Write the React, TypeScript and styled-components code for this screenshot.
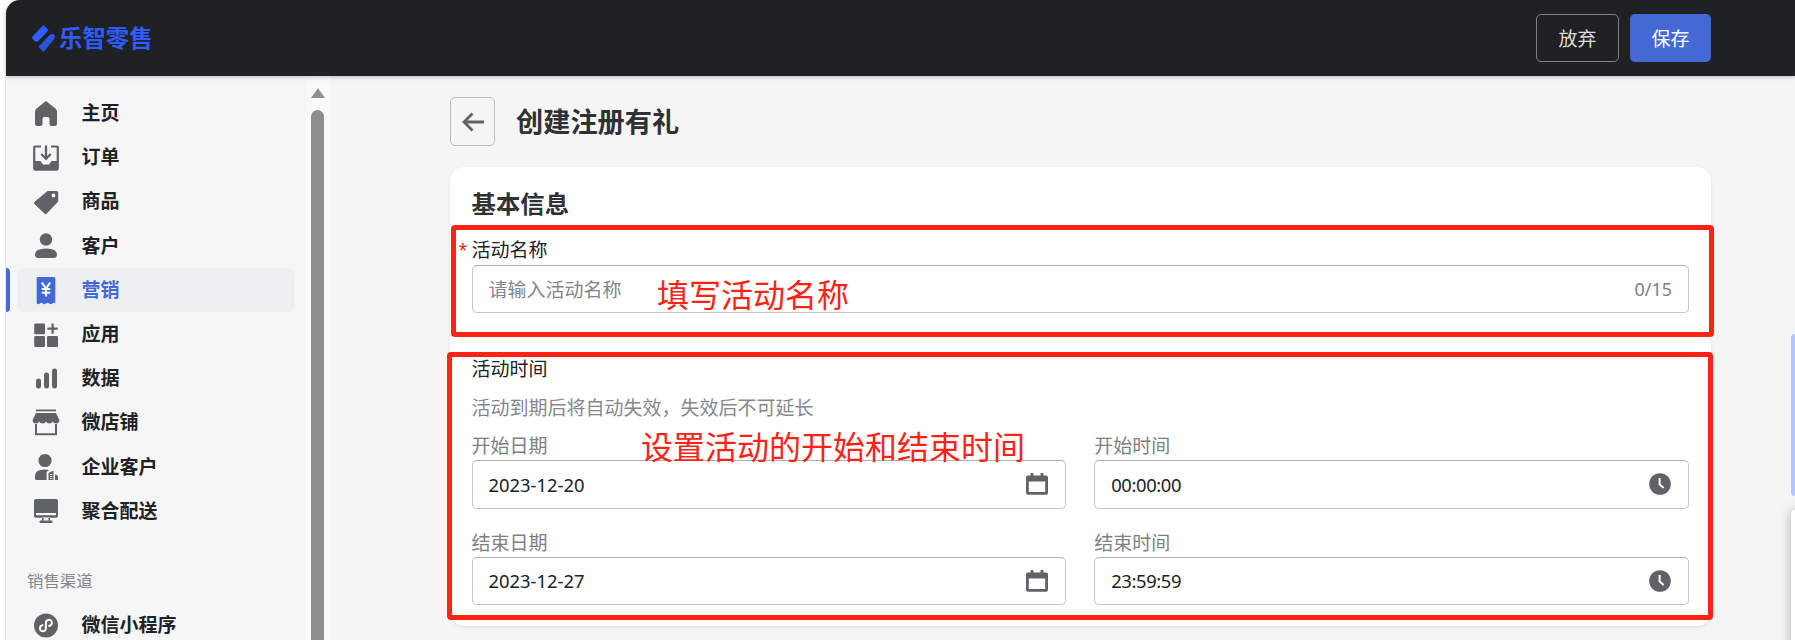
import React from 'react'
import styled, { createGlobalStyle } from 'styled-components'

const GlobalStyle = createGlobalStyle`
  html, body {
    margin: 0;
    padding: 0;
    background: #fff;
    overflow: hidden;
  }
  * {
    box-sizing: border-box;
  }
  body, input, button {
    font-family: "Noto Sans", "Noto Sans CJK SC", sans-serif;
  }
`

const GREY = '#5f6368'

const HomeIcon = () => (
  <svg width="24" height="24" viewBox="0 0 24 24" fill={GREY} overflow="visible">
    <path d="M12 -1 L21.5 6.5 Q23 7.8 23 9.5 V21.5 Q23 24 20.5 24 H17.5 Q15.5 24 15.5 22 V17 Q15.5 15 13.5 15 H10.5 Q8.5 15 8.5 17 V22 Q8.5 24 6.5 24 H3.5 Q1 24 1 21.5 V9.5 Q1 7.8 2.5 6.5 Z" />
  </svg>
)

const OrderIcon = () => (
  <svg width="24" height="24" viewBox="0 0 24 24" fill="none" overflow="visible">
    <path d="M7 0.5 H1.5 Q0.2 0.5 0.2 1.8 V22.2 Q0.2 23.6 1.5 23.6 H22.5 Q23.8 23.6 23.8 22.2 V1.8 Q23.8 0.5 22.5 0.5 H17" stroke={GREY} strokeWidth="2.2" />
    <path d="M0.5 15 H6.5 L9 18.5 H15 L17.5 15 H23.5 V23.5 H0.5 Z" fill={GREY} />
    <path d="M12 -0.5 V12.5 M7.2 8 L12 12.8 L16.8 8" stroke={GREY} strokeWidth="2.3" />
  </svg>
)

const TagIcon = () => (
  <svg width="24" height="24" viewBox="0 0 24 24" fill={GREY} overflow="visible">
    <path
      fillRule="evenodd"
      d="M13.5 1 H22.5 Q24.2 1 24.2 2.7 V11.5 L12.8 23.6 Q11.6 24.8 10.4 23.6 L0.4 14 Q-0.6 13 0.4 12 Z M19.5 3.6 A1.9 1.9 0 1 0 19.5 7.4 A1.9 1.9 0 1 0 19.5 3.6 Z"
    />
  </svg>
)

const UserIcon = () => (
  <svg width="24" height="24" viewBox="0 0 24 24" fill={GREY} overflow="visible">
    <circle cx="12" cy="5.5" r="6.2" />
    <path d="M1 20.5 Q1 14.5 12 14.5 Q23 14.5 23 20.5 Q23 24 19.5 24 H4.5 Q1 24 1 20.5 Z" />
  </svg>
)

const ReceiptIcon = () => (
  <svg width="24" height="24" viewBox="0 0 24 24" fill="none" overflow="visible">
    <path
      d="M4 -1 H20 Q21.3 -1 21.3 0.3 V25.5 Q19.8 24 18.2 25.5 Q16.7 26.8 15.1 25.5 Q13.5 24 12 25.5 Q10.4 26.8 8.9 25.5 Q7.3 24 5.8 25.5 Q4.2 26.8 2.7 25.5 V0.3 Q2.7 -1 4 -1 Z"
      fill="#4369d6"
    />
    <path d="M7.8 4.5 L12 10.5 L16.2 4.5 M12 10.5 V18.5 M7.8 11 H16.2 M7.8 14.8 H16.2" stroke="#fff" strokeWidth="2.1" />
  </svg>
)

const AppsIcon = () => (
  <svg width="24" height="24" viewBox="0 0 24 24" fill={GREY} overflow="visible">
    <rect x="0.2" y="0.5" width="10.8" height="10.8" rx="1.2" />
    <rect x="0.2" y="13" width="10.8" height="11" rx="1.2" />
    <rect x="13" y="13" width="11" height="11" rx="1.2" />
    <path d="M13.4 5.6 H23.8 M18.6 0.5 V10.8" stroke={GREY} strokeWidth="2.3" />
  </svg>
)

const BarsIcon = () => (
  <svg width="24" height="24" viewBox="0 0 24 24" fill={GREY} overflow="visible">
    <rect x="2" y="11.5" width="5" height="10" rx="2.5" />
    <rect x="10" y="5.5" width="5" height="16" rx="2.5" />
    <rect x="18" y="1.5" width="5" height="20" rx="2.5" />
  </svg>
)

const StoreIcon = () => (
  <svg width="24" height="24" viewBox="0 0 24 24" fill="none" overflow="visible">
    <path d="M2 -0.6 H22" stroke={GREY} strokeWidth="1.8" />
    <path d="M2 2 H22 L25.4 9 Q25.4 12.4 22.2 12.4 Q19.4 12.4 18.9 10.4 Q18 12.4 15.3 12.4 Q12.8 12.4 12 10.4 Q11.2 12.4 8.7 12.4 Q6 12.4 5.1 10.4 Q4.6 12.4 1.8 12.4 Q-1.4 12.4 -1.4 9 Z" fill={GREY} />
    <path d="M2 13 V23.2 H22 V13" stroke={GREY} strokeWidth="2" />
  </svg>
)

const CompanyUserIcon = () => (
  <svg width="24" height="24" viewBox="0 0 24 24" fill={GREY} overflow="visible">
    <circle cx="11" cy="5.5" r="6.6" />
    <path d="M1 25 V21 Q1 14.6 11 14.6 Q13.8 14.6 15 15 L12.6 17 V25 H2.5 Q1 25 1 23.5 Z" />
    <path d="M14.5 25 V18 L19.5 15.5 V25 Z M21 25 V19.5 Q24 20 24 22 V25 Z" />
    <path d="M16 19.5 H18.2 M16 21.5 H18.2 M16 23.5 H18.2" stroke="#f7f7f7" strokeWidth="0.9" />
  </svg>
)

const DesktopIcon = () => (
  <svg width="24" height="24" viewBox="0 0 24 24" fill={GREY} overflow="visible">
    <path d="M1.8 0 H22.2 Q24 0 24 1.8 V17 Q24 18.8 22.2 18.8 H1.8 Q0 18.8 0 17 V1.8 Q0 0 1.8 0 Z" />
    <rect x="2" y="14" width="20" height="2.2" fill="#f7f7f7" />
    <path d="M8.5 18.5 L7.8 21.5 H16.2 L15.5 18.5 Z" fill="#f7f7f7" />
    <path d="M9 18.8 L8.4 21.6 M15 18.8 L15.6 21.6" stroke={GREY} strokeWidth="1.6" />
    <rect x="5.5" y="21.4" width="13" height="2.6" rx="1.2" />
  </svg>
)

const MiniProgramIcon = () => (
  <svg width="27" height="27" viewBox="0 0 27 27" fill="none">
    <circle cx="13.5" cy="13.5" r="13.5" fill={GREY} />
    <path
      d="M6.8 15.8 Q6.4 19.8 9.8 20 Q12.9 20 13.4 16.8 V10.2 Q13.9 7 17 7 Q20.4 7.2 20 11.2 Q19.6 13.6 17 14"
      stroke="#fff"
      strokeWidth="2.3"
      strokeLinecap="round"
    />
    <path d="M6.8 15.8 Q7.2 13.6 9.6 13.2" stroke="#fff" strokeWidth="2.3" strokeLinecap="round" />
  </svg>
)

const CalendarIcon = () => (
  <svg width="24" height="24" viewBox="0 0 24 24" fill={GREY}>
    <path
      fillRule="evenodd"
      d="M5.6 1 H8.4 V3.6 H15.6 V1 H18.4 V3.6 H21 Q23 3.6 23 5.6 V20.8 Q23 22.8 21 22.8 H3 Q1 22.8 1 20.8 V5.6 Q1 3.6 3 3.6 H5.6 Z M3.8 9.4 V20 H20.2 V9.4 Z"
    />
  </svg>
)

const ClockIcon = () => (
  <svg width="24" height="24" viewBox="0 0 24 24" fill="none">
    <circle cx="12" cy="12" r="10.8" fill={GREY} />
    <path d="M11.6 6 V12.4 L15.6 16" stroke="#fff" strokeWidth="2" />
  </svg>
)

const BackIcon = () => (
  <svg width="24" height="24" viewBox="0 0 24 24" fill="none">
    <path d="M23 12 H3 M11.5 3.5 L3 12 L11.5 20.5" stroke={GREY} strokeWidth="2.8" />
  </svg>
)

const LogoMark = () => (
  <svg width="23" height="27" viewBox="0 0 23 27" fill="#2f5bff">
    <path d="M11.4 0 L16.6 5.2 L6.4 16 Q4.2 17.8 2.2 15.8 L0.7 14 Q-0.4 12.6 0.7 11.2 Z" />
    <path d="M21.4 9 Q23.8 11 22.4 13.6 Q22 14.4 21.4 15 L11.6 27 L6.4 21.8 L16.6 11 Q19 8.4 21.4 9 Z" fillOpacity="0.85" />
  </svg>
)

const menu = [
  { label: '主页', icon: <HomeIcon /> },
  { label: '订单', icon: <OrderIcon /> },
  { label: '商品', icon: <TagIcon /> },
  { label: '客户', icon: <UserIcon /> },
  { label: '营销', icon: <ReceiptIcon />, active: true },
  { label: '应用', icon: <AppsIcon /> },
  { label: '数据', icon: <BarsIcon /> },
  { label: '微店铺', icon: <StoreIcon /> },
  { label: '企业客户', icon: <CompanyUserIcon /> },
  { label: '聚合配送', icon: <DesktopIcon /> },
]

export default function App() {
  return (
    <Page>
      <GlobalStyle />
      <TopBar>
        <Logo>
          <LogoMark />
          <LogoText>乐智零售</LogoText>
        </Logo>
        <TopActions>
          <GhostButton>放弃</GhostButton>
          <PrimaryButton>保存</PrimaryButton>
        </TopActions>
      </TopBar>
      <Body>
        <Sidebar>
          <Menu>
            {menu.map((item) => (
              <MenuRow key={item.label} $active={item.active}>
                <MenuIcon>{item.icon}</MenuIcon>
                <MenuLabel>{item.label}</MenuLabel>
              </MenuRow>
            ))}
            <SectionTitle>销售渠道</SectionTitle>
            <MenuRow>
              <MenuIcon>
                <MiniProgramIcon />
              </MenuIcon>
              <MenuLabel>微信小程序</MenuLabel>
            </MenuRow>
          </Menu>
          <ScrollTrack>
            <ScrollArrow />
            <ScrollThumb />
          </ScrollTrack>
        </Sidebar>
        <Main>
          <TitleRow>
            <BackButton>
              <BackIcon />
            </BackButton>
            <PageTitle>创建注册有礼</PageTitle>
          </TitleRow>
          <Card>
            <CardTitle>基本信息</CardTitle>
            <NameField>
              <FieldLabel $required>活动名称</FieldLabel>
              <InputBox>
                <TextInput readOnly placeholder="请输入活动名称" />
                <Counter>0/15</Counter>
              </InputBox>
            </NameField>
            <TimeSection>
              <FieldLabel>活动时间</FieldLabel>
              <HelpText>活动到期后将自动失效，失效后不可延长</HelpText>
              <DateGrid>
                <DateField>
                  <SubLabel>开始日期</SubLabel>
                  <InputBox>
                    <TextInput readOnly value="2023-12-20" />
                    <CalendarIcon />
                  </InputBox>
                </DateField>
                <DateField>
                  <SubLabel>开始时间</SubLabel>
                  <InputBox>
                    <TextInput $narrow readOnly value="00:00:00" />
                    <ClockIcon />
                  </InputBox>
                </DateField>
                <DateField>
                  <SubLabel>结束日期</SubLabel>
                  <InputBox>
                    <TextInput readOnly value="2023-12-27" />
                    <CalendarIcon />
                  </InputBox>
                </DateField>
                <DateField>
                  <SubLabel>结束时间</SubLabel>
                  <InputBox>
                    <TextInput $narrow readOnly value="23:59:59" />
                    <ClockIcon />
                  </InputBox>
                </DateField>
              </DateGrid>
            </TimeSection>
            <NameFrame />
            <NameNote>填写活动名称</NameNote>
            <TimeFrame />
            <TimeNote>设置活动的开始和结束时间</TimeNote>
          </Card>
        </Main>
      </Body>
      <SideTab />
      <SidePanel />
    </Page>
  )
}

const Page = styled.div`
  position: relative;
  width: 1795px;
  height: 640px;
  padding-left: 6px;
  overflow: hidden;
  background: #fff;
`
const TopBar = styled.header`
  position: relative;
  z-index: 2;
  height: 76px;
  display: flex;
  justify-content: space-between;
  align-items: center;
  padding: 0 84px 0 26px;
  background: #202124;
  border-top-left-radius: 14px;
  box-shadow: 0 1px 4px rgba(0, 0, 0, 0.25);
`
const Logo = styled.div`
  display: flex;
  align-items: center;
  gap: 4px;
`
const LogoText = styled.div`
  font-size: 23.4px;
  font-weight: 700;
  color: #2f5bff;
  line-height: 30px;
`
const TopActions = styled.div`
  display: flex;
  gap: 11px;
`
const GhostButton = styled.button`
  width: 83px;
  height: 48px;
  font-size: 19px;
  color: #dcdcdc;
  background: transparent;
  border: 1px solid #7f8082;
  border-radius: 5px;
`
const PrimaryButton = styled.button`
  width: 81px;
  height: 48px;
  font-size: 19px;
  color: #fff;
  background: #4469d4;
  border: none;
  border-radius: 5px;
`
const Body = styled.div`
  display: flex;
  height: 564px;
`
const Sidebar = styled.aside`
  width: 325px;
  flex: none;
  display: flex;
  border-left: 1px solid #e4e4e4;
  border-right: 1px solid #e2e2e2;
  margin-left: -1px;
`
const Menu = styled.nav`
  width: 300px;
  flex: none;
  padding: 15.5px 11px 0;
  background: #f6f6f7;
`
const MenuRow = styled.div<{ $active?: boolean }>`
  position: relative;
  height: 44.2px;
  display: flex;
  align-items: center;
  gap: 23.5px;
  padding-left: 17px;
  border-radius: 8px;
  color: ${(p) => (p.$active ? '#4369d6' : '#202124')};
  background: ${(p) => (p.$active ? '#edeef0' : 'transparent')};

  ${(p) =>
    p.$active &&
    `
    &::before {
      content: '';
      position: absolute;
      left: -11px;
      top: 0;
      bottom: 0;
      width: 4px;
      border-radius: 0 4px 4px 0;
      background: #4369d6;
    }
  `}
`
const MenuIcon = styled.span`
  width: 24px;
  height: 24px;
  flex: none;
  display: flex;
  align-items: center;
  justify-content: center;
`
const MenuLabel = styled.span`
  padding-bottom: 3px;
  font-size: 19px;
  font-weight: 700;
`
const SectionTitle = styled.div`
  margin: 37px 0 9px 10px;
  height: 24px;
  line-height: 22px;
  font-size: 16.4px;
  color: #85878b;
`
const ScrollTrack = styled.div`
  flex: 1;
  display: flex;
  flex-direction: column;
  padding: 12px 5px 0 5px;
  background: #f9f9f9;
`
const ScrollArrow = styled.div`
  width: 0;
  height: 0;
  border-left: 7px solid transparent;
  border-right: 7px solid transparent;
  border-bottom: 10px solid #8e8e8e;
`
const ScrollThumb = styled.div`
  width: 13px;
  flex: 1;
  margin-top: 12px;
  background: #8e8e8e;
  border-radius: 7px 7px 0 0;
`
const Main = styled.main`
  flex: 1;
  padding: 21px 84px 0 120px;
  background: #f5f5f5;
`
const TitleRow = styled.div`
  display: flex;
  align-items: center;
  gap: 21px;
`
const BackButton = styled.button`
  width: 45px;
  height: 49px;
  display: flex;
  align-items: center;
  justify-content: center;
  padding: 0;
  background: transparent;
  border: 1px solid #bcbdbf;
  border-radius: 5px;
`
const PageTitle = styled.h1`
  margin: 0;
  font-size: 27.2px;
  line-height: 36px;
  font-weight: 700;
  color: #303133;
`
const Card = styled.section`
  position: relative;
  margin-top: 21px;
  padding: 20px 22px 21px 21.5px;
  background: #fff;
  border-radius: 14px;
  box-shadow: 0 1px 3px rgba(0, 0, 0, 0.1);
`
const CardTitle = styled.h2`
  margin: 0;
  font-size: 24.4px;
  line-height: 34px;
  font-weight: 700;
  color: #303133;
`
const NameField = styled.div`
  margin-top: 17px;
`
const FieldLabel = styled.div<{ $required?: boolean }>`
  position: relative;
  height: 24px;
  line-height: 24px;
  font-size: 19px;
  color: #202124;

  ${(p) =>
    p.$required &&
    `
    &::before {
      content: '*';
      position: absolute;
      left: -13px;
      top: -1px;
      font-size: 16px;
      color: #f01010;
    }
  `}
`
const InputBox = styled.div`
  height: 48px;
  margin-top: 3px;
  display: flex;
  align-items: center;
  gap: 8px;
  padding: 0 16px 0 16px;
  background: #fff;
  border: 1px solid #c4c5c8;
  border-top-color: #aeb0b4;
  border-radius: 5px;
`
const TextInput = styled.input<{ $narrow?: boolean }>`
  flex: 1;
  min-width: 0;
  padding: 0;
  border: none;
  outline: none;
  background: transparent;
  font-size: 18.4px;
  letter-spacing: ${(p) => (p.$narrow ? '-0.4px' : '0')};
  color: #202124;

  &::placeholder {
    font-size: 19px;
    color: #80868b;
  }
`
const Counter = styled.span`
  font-size: 18px;
  color: #7c7f85;
`
const TimeSection = styled.div`
  margin-top: 45px;

  ${FieldLabel} {
    line-height: 22px;
  }
`
const HelpText = styled.div`
  margin-top: 14px;
  height: 24px;
  line-height: 24px;
  font-size: 19px;
  color: #85878c;
`
const DateGrid = styled.div`
  margin-top: 15px;
  display: grid;
  grid-template-columns: 1fr 1fr;
  column-gap: 28px;
  row-gap: 23px;
`
const DateField = styled.div`
  ${InputBox} {
    margin-top: 1px;
    height: 48.5px;
  }
`
const SubLabel = styled.div`
  height: 24px;
  line-height: 22px;
  font-size: 19px;
  color: #7d7f83;
`
const NameFrame = styled.div`
  position: absolute;
  left: 1px;
  top: 58px;
  width: 1263px;
  height: 112px;
  border: 5px solid #ff2216;
  border-radius: 4px;
`
const TimeFrame = styled.div`
  position: absolute;
  left: -3px;
  top: 185px;
  width: 1266px;
  height: 268px;
  border: 5px solid #ff2216;
  border-radius: 4px;
`
const NameNote = styled.div`
  position: absolute;
  left: 207px;
  top: 108px;
  font-size: 32px;
  line-height: 40px;
  color: #ff2216;
`
const TimeNote = styled.div`
  position: absolute;
  left: 191px;
  top: 260px;
  font-size: 32px;
  line-height: 40px;
  color: #ff2216;
`
const SideTab = styled.div`
  position: absolute;
  right: -6px;
  top: 334px;
  width: 10px;
  height: 162px;
  background: #b4c5fb;
  border-radius: 4px;
`
const SidePanel = styled.div`
  position: absolute;
  right: -6px;
  top: 510px;
  width: 10px;
  height: 140px;
  background: #fff;
  border-radius: 4px;
  box-shadow: 0 0 12px rgba(0, 0, 0, 0.3);
`
